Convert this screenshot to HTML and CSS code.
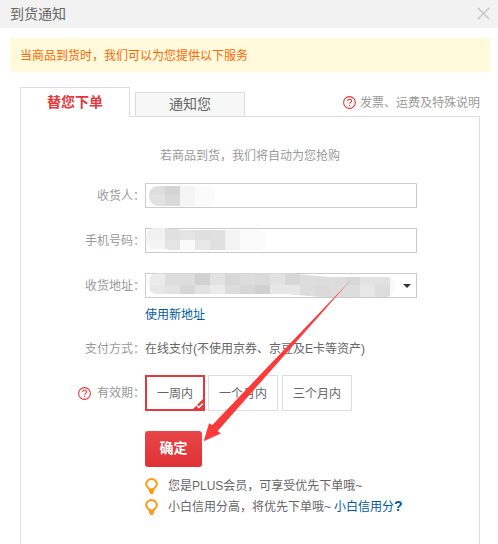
FILE: index.html
```
<!DOCTYPE html>
<html lang="zh-CN">
<head>
    <meta charset="UTF-8">
    <title>到货通知</title>
    <link rel="stylesheet" href="styles.css">
</head>
<body>
    <div class="dialog">
        <div class="dialog-header">
            <span class="dialog-title">到货通知</span>
            <svg class="close" width="13" height="13" viewBox="0 0 13 13"><path d="M.7.7l11.6 11.6M12.3.7L.7 12.3"/></svg>
        </div>

        <div class="notice">当商品到货时，我们可以为您提供以下服务</div>

        <div class="tabs">
            <div class="tab active">替您下单</div>
            <div class="tab">通知您</div>
            <div class="explain">
                <svg class="help" width="13" height="13" viewBox="0 0 13 13"><circle cx="6.5" cy="6.5" r="5.9"/><path d="M4.6 5.1c0-2.5 3.9-2.4 3.9-.1 0 1.4-1.9 1.4-1.9 2.8M6.6 8.8v1.3"/></svg>
                <span>发票、运费及特殊说明</span>
            </div>
        </div>

        <div class="panel">
            <div class="hint">若商品到货，我们将自动为您抢购</div>

            <div class="row">
                <div class="label">收货人：</div>
                <div class="field">
                    <svg class="mask" width="272" height="25" viewBox="145 183 272 25">
                        <clipPath id="m1"><rect x="149" y="186" width="66" height="20" rx="9"/></clipPath>
                        <g clip-path="url(#m1)">
                            <path fill="#dedede" d="M148 186h17v9h-17z"/>
                            <path fill="#e2e2e2" d="M148 195h17v11h-17z"/>
                            <path fill="#d4d4d4" d="M165 186h15v9h-15z"/>
                            <path fill="#dadada" d="M165 195h15v11h-15z"/>
                            <path fill="#f5f5f5" d="M180 186h15v20h-15z"/>
                            <path fill="#fbfbfb" d="M195 186h20v20h-20z"/>
                        </g>
                    </svg>
                </div>
            </div>

            <div class="row">
                <div class="label">手机号码：</div>
                <div class="field">
                    <svg class="mask" width="272" height="25" viewBox="145 228 272 25">
                        <clipPath id="m2"><path d="M154 228h15v1h10v1h78a10 10 0 0 1 0 20h-89v-1h-14a8 10 0 0 1 0-21z"/></clipPath>
                        <g clip-path="url(#m2)">
                            <path fill="#f1f1f1" d="M145 228h20v12h-20z"/>
                            <path fill="#f4f4f4" d="M145 240h20v10h-20z"/>
                            <path fill="#e0e0e0" d="M165 228h15v12h-15z"/>
                            <path fill="#e4e4e4" d="M165 240h15v10h-15zM180 229h15v11h-15z"/>
                            <path fill="#fafafa" d="M180 240h15v10h-15z"/>
                            <path fill="#dfdfdf" d="M195 229h15v11h-15z"/>
                            <path fill="#e7e7e7" d="M195 240h15v10h-15z"/>
                            <path fill="#e0e0e0" d="M210 229h15v21h-15z"/>
                            <path fill="#f3f3f3" d="M225 229h15v21h-15z"/>
                            <path fill="#fbfbfb" d="M240 229h27v21h-27z"/>
                        </g>
                    </svg>
                </div>
            </div>

            <div class="row address">
                <div class="label">收货地址：</div>
                <div class="field select">
                    <svg class="mask" width="272" height="25" viewBox="145 273 272 25">
                        <clipPath id="m3"><path d="M157 273.500h134l18 1.500 20 2h58a8 10 0 0 1 0 20h-62l-17-1-20-2H157a10 10 0 0 1 0-20.500z"/></clipPath>
                        <g clip-path="url(#m3)">
                            <path fill="#ddd" d="M165 273h225v25H165z"/>
                            <path fill="#f8f8f8" d="M145 273h5v25h-5zM390 273h6v25h-6z"/>
                            <path fill="#ebebeb" d="M150 273h15v12h-15zM210 285h15v13h-15z"/>
                            <path fill="#e7e7e7" d="M150 285h15v13h-15zM270 285h30v13h-30zM360 285h15v13h-15z"/>
                            <path fill="#e2e2e2" d="M210 273h15v12h-15zM270 273h15v12h-15zM165 285h15v13h-15zM195 285h15v13h-15zM360 273h30v12h-30z"/>
                            <path fill="#d1d1d1" d="M195 273h15v12h-15zM255 285h15v13h-15z"/>
                            <path fill="#d7d7d7" d="M225 273h15v12h-15zM285 273h15v12h-15zM345 273h15v12h-15zM180 285h15v13h-15zM240 285h15v13h-15z"/>
                            <path fill="#dadada" d="M255 273h15v12h-15zM315 285h15v13h-15z"/>
                        </g>
                    </svg>
                    <span class="caret"></span>
                </div>
            </div>
            <div class="new-address"><a>使用新地址</a></div>

            <div class="row pay">
                <div class="label">支付方式：</div>
                <div class="value">在线支付(不使用京券、京豆及E卡等资产)</div>
            </div>

            <div class="row period">
                <div class="label">
                    <svg class="help" width="13" height="13" viewBox="0 0 13 13"><circle cx="6.5" cy="6.5" r="5.9"/><path d="M4.6 5.1c0-2.5 3.9-2.4 3.9-.1 0 1.4-1.9 1.4-1.9 2.8M6.6 8.8v1.3"/></svg>
                    有效期：
                </div>
                <div class="options">
                    <div class="option selected">一周内
                        <svg class="tick" width="12" height="12" viewBox="0 0 12 12"><path class="corner" d="M12 0v12H0z"/><path class="check" d="M4.8 7.400l2.100 2.100 3.900-4"/></svg>
                    </div>
                    <div class="option">一个月内</div>
                    <div class="option">三个月内</div>
                </div>
            </div>

            <div class="submit">确定</div>

            <div class="tip">
                <svg class="bulb" width="13" height="16" viewBox="0 0 13 16"><path d="M4.500 11.200C3.700 9.600 1.200 8.900 1.200 6.200a5.300 5.200 0 0 1 10.600 0c0 2.700-2.500 3.400-3.300 5zM4 13.200h5M5 15.200h3"/></svg>
                <span>您是PLUS会员，可享受优先下单哦~</span>
            </div>
            <div class="tip">
                <svg class="bulb" width="13" height="16" viewBox="0 0 13 16"><path d="M4.500 11.200C3.700 9.600 1.200 8.900 1.200 6.200a5.300 5.200 0 0 1 10.600 0c0 2.700-2.500 3.400-3.300 5zM4 13.200h5M5 15.200h3"/></svg>
                <span>小白信用分高，将优先下单哦~</span>
                <a>小白信用分<b>?</b></a>
            </div>
        </div>

        <svg class="arrow" width="150" height="165" viewBox="203 277 150 165">
            <linearGradient id="fade" gradientUnits="userSpaceOnUse" x1="353" y1="277" x2="330" y2="303">
                <stop offset="0" stop-color="#fd3a3a" stop-opacity=".4"/>
                <stop offset="1" stop-color="#fd3a3a"/>
            </linearGradient>
            <path fill="url(#fade)" d="M352.400 278.200L217.700 431l3 2.600L203.700 441.300 209 423.200l3.300 1.800z"/>
        </svg>
    </div>
</body>
</html>
```
FILE: styles.css
```
body {
    margin: 0;
    background: #fff;
    color: #666;
    font: 12px/18px "Liberation Sans", "Noto Sans CJK SC", sans-serif;
}

.dialog {
    position: relative;
    height: 544px;
    overflow: hidden;
    display: flex;
    flex-direction: column;
}

.dialog-header {
    height: 28px;
    flex: none;
    box-sizing: border-box;
    padding: 0 8px 1px 10px;
    display: flex;
    align-items: center;
    justify-content: space-between;
    background: #f2f2f2;
}

.dialog-title {
    font-size: 14px;
}

.close {
    fill: none;
    stroke: #c8c8c8;
    stroke-width: 1.6;
}

.notice {
    box-sizing: border-box;
    height: 34px;
    margin: 10px 8px 0 10px;
    padding: 1px 0 0 10px;
    line-height: 34px;
    flex: none;
    background: #fffadc;
    color: #ff6600;
}

.tabs {
    position: relative;
    z-index: 1;
    display: flex;
    align-items: flex-end;
    height: 30px;
    margin: 15px 18px -1px 20px;
    flex: none;
}

.tab {
    box-sizing: border-box;
    width: 110px;
    height: 25px;
    margin-right: 5px;
    border: 1px solid #ddd;
    background: #f7f7f7;
    font-size: 14px;
    line-height: 23px;
    text-align: center;
}

.tab.active {
    height: 30px;
    border-bottom: 0;
    background: #fff;
    color: #e4393c;
    font-weight: bold;
    line-height: 29px;
}

.explain {
    display: flex;
    align-items: center;
    gap: 4px;
    margin-left: auto;
    height: 29px;
    color: #999;
}

.help {
    flex: none;
    fill: none;
    stroke: #e4393c;
    stroke-width: 1.1;
}

.panel {
    flex: 1;
    margin: 0 18px 0 20px;
    border: 1px solid #ddd;
    border-bottom: 0;
}

.hint {
    margin-top: 30px;
    color: #999;
    text-align: center;
}

.row {
    display: flex;
    align-items: center;
    margin-top: 20px;
}

.hint + .row {
    margin-top: 18px;
}

.label {
    display: flex;
    align-items: center;
    justify-content: flex-end;
    gap: 6px;
    width: 124px;
    color: #999;
}

.field {
    position: relative;
    box-sizing: border-box;
    width: 272px;
    height: 25px;
    border: 1px solid #ccc;
}

.mask {
    position: absolute;
    left: -1px;
    top: -1px;
}

.caret {
    position: absolute;
    right: 5px;
    top: 10px;
    border: 4px solid transparent;
    border-top-color: #333;
    border-bottom: 0;
}

.new-address {
    margin: 8px 0 0 124px;
}

a {
    color: #005aa0;
}

.row.pay {
    margin-top: 16px;
}

.row.period {
    margin-top: 17px;
}

.options {
    display: flex;
}

.option {
    position: relative;
    box-sizing: border-box;
    width: 70px;
    height: 36px;
    margin-right: 4px;
    border: 1px solid #ddd;
    line-height: 36px;
    text-align: center;
}

.option.selected {
    width: 60px;
    margin-right: 3px;
    border: 2px solid #e4393c;
    line-height: 34px;
}

.tick {
    position: absolute;
    right: -1px;
    bottom: -1px;
}

.tick .corner {
    fill: #e4393c;
}

.tick .check {
    fill: none;
    stroke: #fff;
    stroke-width: 1.5;
}

.submit {
    width: 57px;
    height: 36px;
    margin: 20px 0 8px 124px;
    border-radius: 3px;
    background: linear-gradient(#e74649, #df3134);
    color: #fff;
    font-size: 14px;
    font-weight: bold;
    line-height: 35px;
    text-align: center;
}

.tip {
    display: flex;
    align-items: center;
    height: 21px;
    margin-left: 124px;
}

.tip span {
    margin-left: 10px;
}

.tip a {
    margin-left: 3px;
}

.tip b {
    font-size: 14px;
    line-height: 1;
}

.bulb {
    fill: none;
    stroke: #ff9a14;
    stroke-width: 2;
}

.arrow {
    position: absolute;
    left: 203px;
    top: 277px;
}
```
